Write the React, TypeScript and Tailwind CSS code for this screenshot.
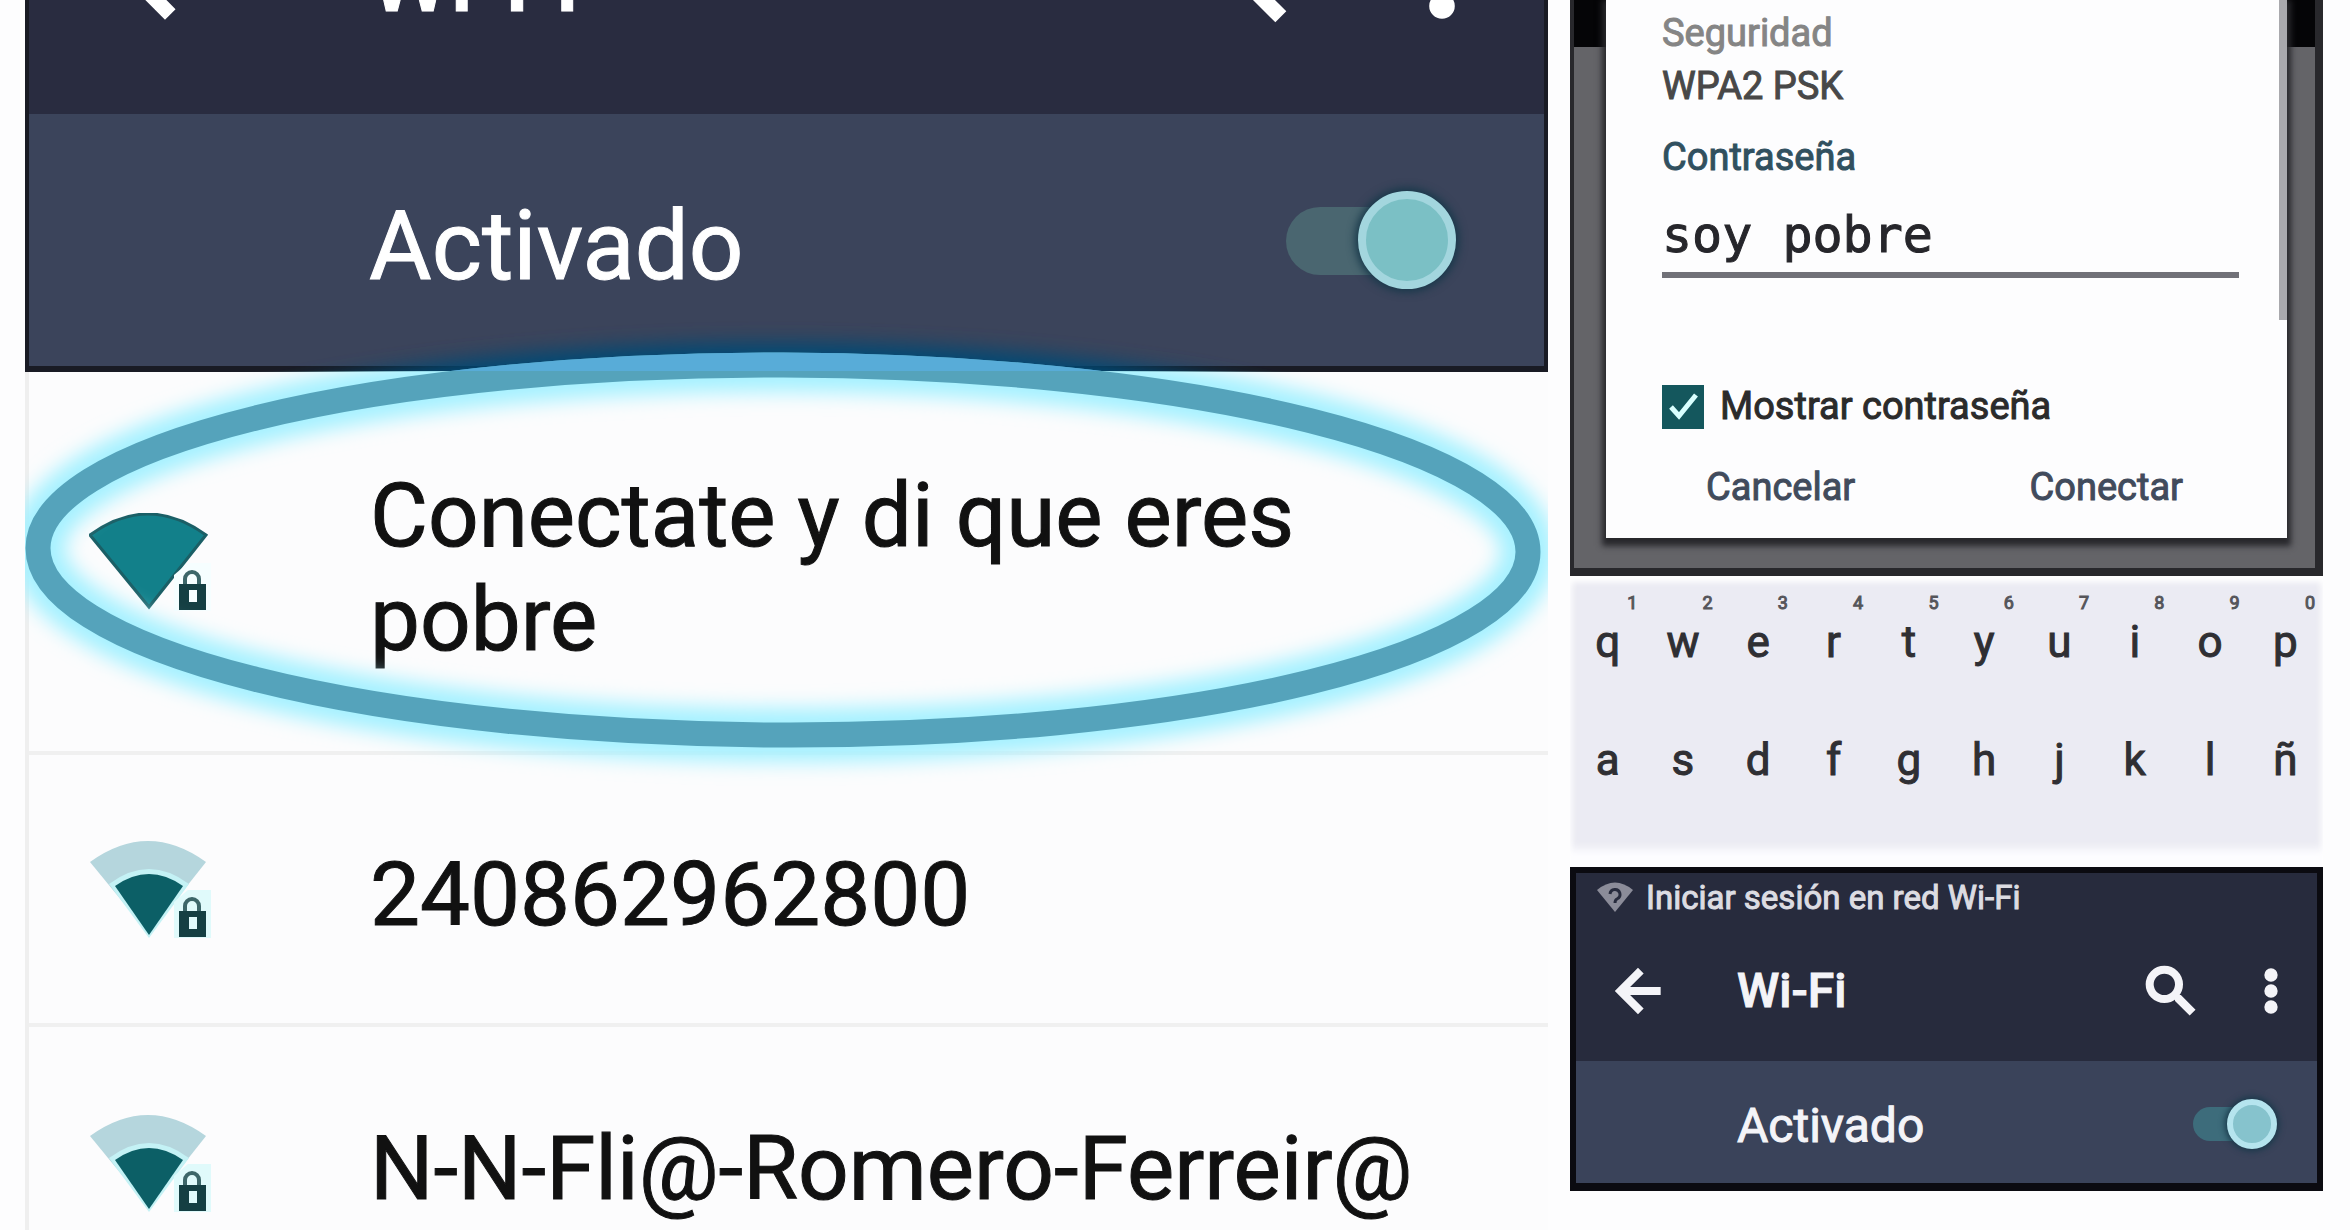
import { MdArrowBack, MdMoreVert, MdSearch } from "react-icons/md";

const bigIcon = "size-32 [&_path:last-child]:stroke-current [&_path:last-child]:stroke-[0.8]";
const smallIcon = "size-16 [&_path:last-child]:stroke-current [&_path:last-child]:stroke-1";

function WifiLock({ full }: { full?: boolean }) {
  return (
    <svg viewBox="0 0 124 98" className="h-[98px] w-[124px] shrink-0" aria-hidden="true">
      <path
        d="M1 22 Q59 -20 117 22 L60 94 Z"
        fill={full ? "#12808a" : "#b5d6dd"}
        stroke={full ? "#1b5f66" : "none"}
        strokeWidth="3"
      />
      {!full && <path d="M20 44 Q60 14 100 44 L60 98 Z" fill="#c4f2f5" />}
      {!full && <path d="M26 46 Q60 22 94 46 L60 95 Z" fill="#0c5f66" />}
      <path d="M85 70 V62 L99 50 L122 50 V98 H85 Z" fill={full ? "#f6feff" : "#e0fafb"} />
      <path d="M96 74 V66 a7 7 0 0 1 14 0 V74" fill="none" stroke="#3d6669" strokeWidth="4" />
      <path fillRule="evenodd" d="M90 71 H117 V97 H90 Z M100 77 V89 H108 V77 Z" fill="#153f43" />
    </svg>
  );
}

function Network({ name, full, className }: { name: string; full?: boolean; className: string }) {
  return (
    <li className={`flex items-center border-b-4 border-[#f0f0f0] pl-[60px] ${className}`}>
      <button className="flex w-full items-center text-left">
        <WifiLock full={full} />
        <span className="ml-[157px] max-w-[1080px] pt-3 text-[89px] leading-[104px] text-[#111]">{name}</span>
      </button>
    </li>
  );
}

function BigSwitch() {
  return (
    <label className="relative mr-[88px] block h-[98px] w-[170px]">
      <input type="checkbox" role="switch" aria-label="Activado" defaultChecked className="absolute inset-0 z-10 size-full opacity-0" />
      <span className="absolute top-4 left-0 h-[68px] w-[130px] rounded-full bg-[#4a6670]" />
      <span className="absolute top-0 right-0 size-[98px] rounded-full border-8 border-[#a3d6de] bg-[#7bc0c5] shadow-[0_0_8px_3px_#17384a]" />
    </label>
  );
}

function SmallSwitch() {
  return (
    <label className="relative mr-10 block h-[50px] w-[84px]">
      <input type="checkbox" role="switch" aria-label="Activado" defaultChecked className="absolute inset-0 z-10 size-full opacity-0" />
      <span className="absolute top-2 left-0 h-[34px] w-[60px] rounded-full bg-[#3d6c7b]" />
      <span className="absolute top-0 right-0 size-[50px] rounded-full border-6 border-[#b5e4ee] bg-[#86c3cd] shadow-[0_0_6px_2px_#17384a]" />
    </label>
  );
}

function Ring({ color, width, glow }: { color: string; width: number; glow?: boolean }) {
  return (
    <ellipse
      cx="758"
      cy="220"
      rx="745"
      ry="185"
      transform="rotate(0.15 758 220)"
      fill="none"
      stroke={color}
      strokeWidth={width}
      filter={glow ? "url(#glow)" : undefined}
    />
  );
}

function NetworkList() {
  return (
    <section className="relative flex min-w-0 flex-col">
      <header className="border-x-4 border-b-6 border-[#191b24] text-white">
        <div className="h-[114px] overflow-hidden bg-[#292c40]">
          <div className="-mt-[90px] flex h-32 items-center pr-[38px] pl-[72px]">
            <button aria-label="Atrás"><MdArrowBack className={bigIcon} /></button>
            <h1 className="ml-[140px] flex-1 pt-3 text-[92px] leading-none font-medium">Wi-Fi</h1>
            <button aria-label="Buscar"><MdSearch className={bigIcon} /></button>
            <button aria-label="Más opciones" className="ml-[76px]"><MdMoreVert className={bigIcon} /></button>
          </div>
        </div>
        <div className="flex h-[252px] items-center justify-between bg-[#3b445b] pl-[340px]">
          <span className="pt-3 text-[96px] leading-none">Activado</span>
          <BigSwitch />
        </div>
      </header>
      <ul className="flex-1 border-l-4 border-[#efefef] bg-[#fcfcfd]">
        <Network name="Conectate y di que eres pobre" full className="h-[383px]" />
        <Network name="240862962800" className="h-[272px]" />
        <Network name="N-N-Fli@-Romero-Ferreir@" className="h-[276px]" />
      </ul>
      <svg viewBox="0 0 1523 440" className="pointer-events-none absolute top-[330px] left-0 h-[440px] w-full overflow-visible" aria-hidden="true">
        <defs>
          <filter id="glow" x="-5%" y="-15%" width="110%" height="130%">
            <feGaussianBlur stdDeviation="10" />
          </filter>
          <clipPath id="onHeader"><rect x="0" y="-20" width="1523" height="61" /></clipPath>
          <clipPath id="onList"><rect x="0" y="41" width="1523" height="430" /></clipPath>
        </defs>
        <g clipPath="url(#onHeader)"><Ring color="#064a74" width={44} glow /></g>
        <g clipPath="url(#onList)"><Ring color="#a5f1ff" width={54} glow /></g>
        <Ring color="#55a3bb" width={25} />
        <g clipPath="url(#onHeader)"><Ring color="#58acd8" width={25} /></g>
      </svg>
    </section>
  );
}

function PasswordDialog() {
  return (
    <section className="border-r-8 border-b-8 border-l-4 border-[#28282c] bg-[linear-gradient(#050507_47px,#646468_47px)] pr-7 pb-[30px] pl-8">
      <form className="relative h-[538px] bg-[#fdfdfe] pt-px pr-12 pl-14 text-[38px] leading-[49px] shadow-[0_4px_6px_4px_#28282c]" onSubmit={(e) => e.preventDefault()}>
        <div className="absolute top-0 right-0 h-80 w-2 bg-[#a9a9ad]" />
        <p className="mt-2 text-[#858585]">Seguridad</p>
        <p className="mt-1 text-[#484848]">WPA2 PSK</p>
        <label htmlFor="password" className="mt-[22px] block text-[#31505f]">Contraseña</label>
        <input
          id="password"
          type="text"
          defaultValue="soy pobre"
          className="mt-6 block h-[72px] w-full border-b-6 border-[#717178] bg-transparent pb-2 font-['DejaVu_Sans_Mono',monospace] text-[50px] text-[#26262b] outline-none"
        />
        <label className="mt-[104px] flex items-center text-[#2b2b2b]">
          <span className="relative mr-4 block h-11 w-[42px]">
            <input type="checkbox" defaultChecked className="block size-full appearance-none bg-[#14575d]" />
            <svg viewBox="0 0 42 44" className="pointer-events-none absolute inset-0 size-full" aria-hidden="true">
              <path d="M9 22 L17 31 L34 10" fill="none" stroke="#d9ffff" strokeWidth="5" />
            </svg>
          </span>
          Mostrar contraseña
        </label>
        <div className="mt-8 flex justify-between pr-14 pl-11 text-[#414b5c]">
          <button type="button">Cancelar</button>
          <button type="submit">Conectar</button>
        </div>
      </form>
    </section>
  );
}

const topRow = ["q", "w", "e", "r", "t", "y", "u", "i", "o", "p"];
const homeRow = ["a", "s", "d", "f", "g", "h", "j", "k", "l", "ñ"];

function Keyboard() {
  return (
    <section className="h-[291px] bg-[#ebebf3] pt-[18px] text-[44px] leading-[60px] text-[#2f2f33] shadow-[inset_0_6px_6px_#fff,inset_0_-18px_8px_#fdfdff]">
      <div className="grid grid-cols-10">
        {topRow.map((key, i) => (
          <button key={key} className="relative h-[118px] pt-[18px] pb-10">
            {key}
            <span className="absolute top-0 right-2 text-[18px] leading-none text-[#55555a]">{(i + 1) % 10}</span>
          </button>
        ))}
        {homeRow.map((key) => (
          <button key={key} className="h-[118px] pt-[18px] pb-10">{key}</button>
        ))}
      </div>
    </section>
  );
}

function WifiSettings() {
  return (
    <section className="border-x-6 border-t-6 border-b-8 border-[#0b0b11] text-[#f4f4f8]">
      <div className="h-[188px] bg-[#272b3d]">
        <div className="flex h-12 items-center pl-5 text-[33px] leading-none text-[#dcdce2]">
          <svg viewBox="0 0 38 32" className="mr-3 h-8 w-[38px]" aria-hidden="true">
            <path d="M1 9 Q19 -6 37 9 L19 31 Z" fill="#8b8c99" />
            <path d="M14 13 a5 5 0 1 1 7 5 q-2 1 -2 4" fill="none" stroke="#272b3d" strokeWidth="3" />
          </svg>
          Iniciar sesión en red Wi-Fi
        </div>
        <div className="flex h-[140px] items-center pr-[14px] pl-[30px]">
          <button aria-label="Atrás"><MdArrowBack className={smallIcon} /></button>
          <h2 className="ml-[67px] flex-1 text-[48px] leading-none font-medium">Wi-Fi</h2>
          <button aria-label="Buscar"><MdSearch className={smallIcon} /></button>
          <button aria-label="Más opciones" className="ml-9"><MdMoreVert className={smallIcon} /></button>
        </div>
      </div>
      <div className="flex h-[122px] items-center justify-between bg-[#3a435a] pt-1 pl-[161px]">
        <span className="pt-1 text-[48px] leading-none">Activado</span>
        <SmallSwitch />
      </div>
    </section>
  );
}

export default function App() {
  return (
    <main className="grid h-screen grid-cols-[minmax(0,1523fr)_minmax(0,753fr)] gap-x-[22px] overflow-hidden bg-[#fdfdfe] pr-[27px] pl-[25px] font-['Roboto',sans-serif] [-webkit-text-stroke:1px]">
      <NetworkList />
      <div className="flex min-w-0 flex-col">
        <PasswordDialog />
        <Keyboard />
        <WifiSettings />
      </div>
    </main>
  );
}
